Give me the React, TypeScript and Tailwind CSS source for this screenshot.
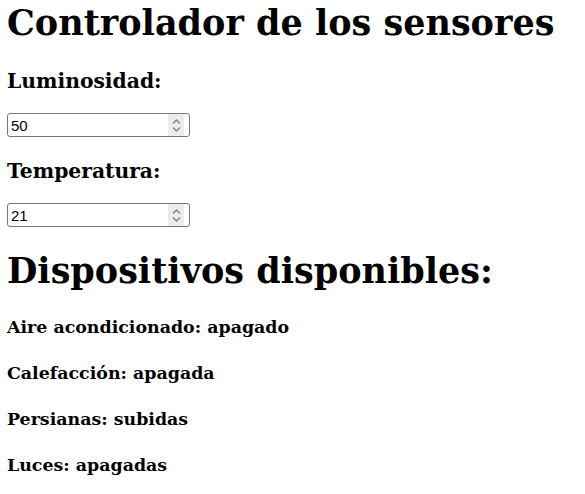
import { useState } from "react";

const DISPOSITIVOS = [
  { nombre: "Aire acondicionado", estado: "apagado" },
  { nombre: "Calefacción", estado: "apagada" },
  { nombre: "Persianas", estado: "subidas" },
  { nombre: "Luces", estado: "apagadas" },
];

function NumberInput({ value, onChange }: { value: number; onChange: (v: number) => void }) {
  return (
    <div className="relative mt-[17px] h-[24px] w-[183px]">
      <input
        type="number"
        value={value}
        onChange={(e) => onChange(Number(e.target.value))}
        className="block h-full w-full rounded-[3px] border border-[#767676] bg-white pl-[3px] pr-[26px] text-[15px] text-black [appearance:textfield] [font-family:'Liberation_Sans',Arial,sans-serif] [&::-webkit-inner-spin-button]:appearance-none [&::-webkit-outer-spin-button]:appearance-none"
      />
      <div className="pointer-events-none absolute bottom-[1px] right-[6px] top-[1px] flex w-[16px] flex-col items-center justify-center gap-[3px] bg-[#ececf0]">
        <svg width="9" height="5" viewBox="0 0 9 5" fill="none" stroke="#7f7f85" strokeWidth="1.4">
          <path d="M1 4.5 4.5 1 8 4.5" />
        </svg>
        <svg width="9" height="5" viewBox="0 0 9 5" fill="none" stroke="#7f7f85" strokeWidth="1.4">
          <path d="M1 0.5 4.5 4 8 0.5" />
        </svg>
      </div>
    </div>
  );
}

export default function App() {
  const [luz, setLuz] = useState(50);
  const [temp, setTemp] = useState(21);

  return (
    <main className="min-h-screen bg-white px-[7px] text-black [font-family:'DejaVu_Serif',serif]">
      <h1 className="text-[35px] font-bold leading-[46px]">Controlador de los sensores</h1>

      <h3 className="mt-[20px] text-[20.3px] font-bold leading-[30px]">Luminosidad:</h3>
      <NumberInput value={luz} onChange={setLuz} />

      <h3 className="mt-[19px] text-[20.3px] font-bold leading-[30px]">Temperatura:</h3>
      <NumberInput value={temp} onChange={setTemp} />

      <h1 className="mt-[21px] text-[35px] font-bold leading-[46px]">Dispositivos disponibles:</h1>
      <div className="mt-[20px] flex flex-col gap-[20px]">
        {DISPOSITIVOS.map((d) => (
          <h4 key={d.nombre} className="text-[17.4px] font-bold leading-[26px]">
            {d.nombre}: {d.estado}
          </h4>
        ))}
      </div>
    </main>
  );
}
